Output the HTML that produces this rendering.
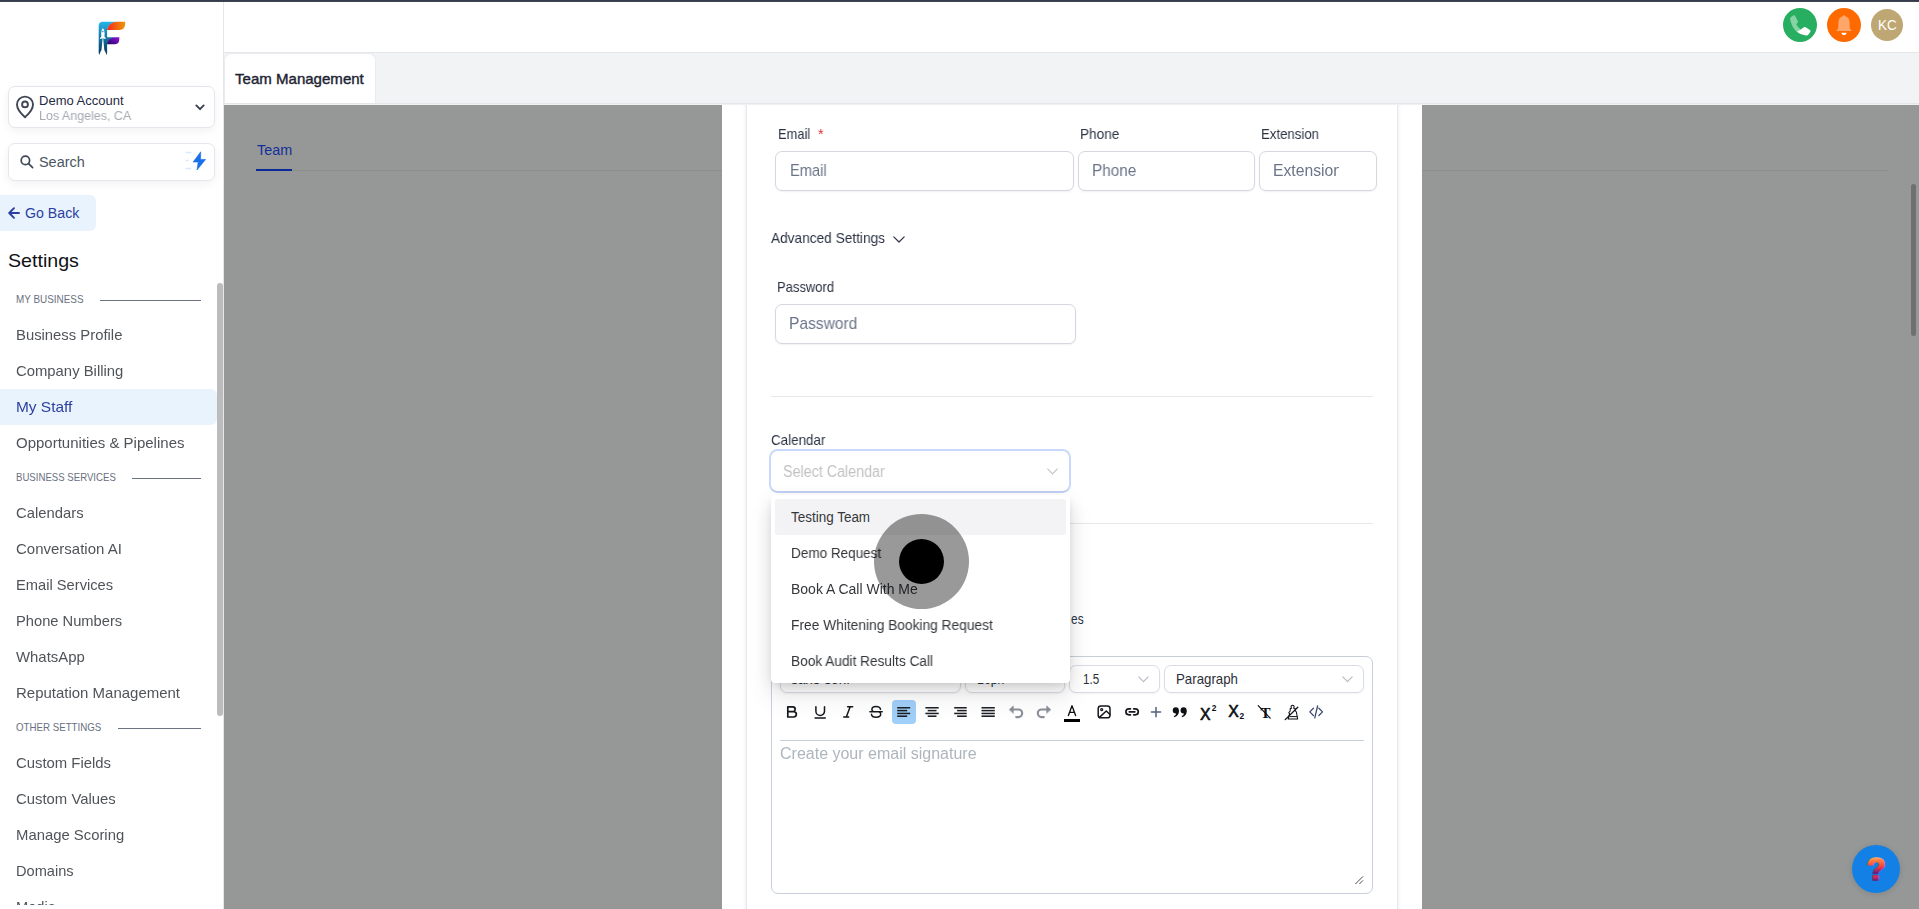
<!DOCTYPE html>
<html lang="en">
<head>
<meta charset="utf-8">
<title>Team Management</title>
<style>
*{box-sizing:border-box;margin:0;padding:0}
html,body{width:1919px;height:909px;overflow:hidden;background:#fff;font-family:"Liberation Sans",sans-serif;color:#374151}
.t{position:absolute;white-space:pre}
.a{position:absolute}
svg{position:absolute;overflow:visible}
#topstrip{left:0;top:0;width:1919px;height:2px;background:#353b4e;box-shadow:inset 0 -1px 0 #40444f;z-index:50}
#sidebar{left:0;top:0;width:224px;height:909px;background:#fff;border-right:1px solid #e5e7eb;z-index:20;overflow:hidden}
.box{position:absolute;left:8px;width:207px;background:#fff;border:1px solid #e4e7ec;border-radius:7px;box-shadow:0 3px 10px rgba(16,24,40,.055)}
.secline{position:absolute;height:1px;background:#6b7280}
#header{left:224px;top:0;width:1695px;height:53px;background:#fff;border-bottom:1px solid #e5e7eb;z-index:20}
#tabbar{left:224px;top:53px;width:1695px;height:52px;background:#f2f3f5;border-bottom:1px solid #eef0f3;box-shadow:inset 0 -1px 0 #e4e6ea;z-index:20}
#tab{left:0px;top:0px;width:152px;height:50px;background:#fff;border-radius:7px 7px 0 0;border:1px solid #e9ebef;border-bottom:none}
#main{left:224px;top:105px;width:1695px;height:804px;background:#969897;z-index:5;overflow:hidden}
#modal{left:722px;top:105px;width:700px;height:804px;background:#fff;z-index:10;overflow:hidden}
.inp{position:absolute;height:40px;border:1px solid #d5d8e0;border-radius:7px;background:#fff;box-shadow:0 1px 2px rgba(16,24,40,.06)}
.hr{position:absolute;height:1px;background:#e5e7eb}
.sel{position:absolute;height:28px;top:560px;border:1px solid #d9dce3;border-radius:7px;background:#fff;box-shadow:0 1px 2px rgba(16,24,40,.05)}
</style>
</head>
<body>
<div id="topstrip" class="a"></div>
<div id="sidebar" class="a">
<svg style="left:90px;top:15px" width="45" height="45" viewBox="0 0 45 45">
<defs>
<linearGradient id="lgA" x1="0" y1="0" x2="0" y2="1"><stop offset="0" stop-color="#27b7ea"/><stop offset=".45" stop-color="#117aa8"/><stop offset="1" stop-color="#0a3558"/></linearGradient>
<linearGradient id="lgB" x1="0" y1="0" x2="1" y2="0"><stop offset="0" stop-color="#f8241c"/><stop offset=".5" stop-color="#f2620f"/><stop offset="1" stop-color="#ee960a"/></linearGradient>
<linearGradient id="lgC" x1="0" y1="1" x2="1" y2="0"><stop offset="0" stop-color="#22085f"/><stop offset="1" stop-color="#9310e0"/></linearGradient>
</defs>
<path d="M8.7 38 V10.8 Q8.7 6.7 12.8 6.7 H28 Q18.8 7.4 17.1 14.9 V22.3 H25.5 Q18.8 23 17.1 29.2 V38 L16.6 39.9 L15.5 37.2 L14.3 35 L13.25 24 H12.55 L11.5 35 L10.3 37.2 L9.2 39.9 Z" fill="url(#lgA)"/>
<path d="M16.9 14.9 Q18.6 7 28 6.8 H35.2 V8.6 Q35.2 14.9 29.4 14.9 Z" fill="url(#lgB)"/>
<path d="M16.9 29.2 Q18.4 22.5 25.4 22.3 H29.3 V24 Q29.3 29.2 25 29.2 Z" fill="url(#lgC)"/>
<path d="M12.9 13.1 Q14.7 15 14.6 18.2 L14.5 21.4 L15.7 23 L15.7 24 L13.7 23.4 L12.9 23.7 L12.1 23.4 L10.1 24 L10.1 23 L11.3 21.4 L11.2 18.2 Q11.1 15 12.9 13.1 Z" fill="#fff"/>
<circle cx="12.9" cy="16.5" r="0.75" fill="#2c90c2"/>
</svg>
<div class="box" style="top:86px;height:42px"></div>
<svg style="left:15px;top:95px" width="20" height="24" viewBox="0 0 20 24" fill="none" stroke="#3f4756" stroke-width="1.9" stroke-linejoin="round"><path d="M10 22.2 C10 22.2 2 15.4 2 9.6 A8 8 0 0 1 18 9.6 C18 15.4 10 22.2 10 22.2 Z"/><circle cx="10" cy="9.4" r="2.9"/></svg>
<div class="t" style="left:39.4px;top:94px;font-size:12.6px;line-height:14px;color:#1f2a44;transform:scaleX(1.0329);transform-origin:0 0;z-index:2;">Demo Account</div>
<div class="t" style="left:39.4px;top:109px;font-size:12.6px;line-height:14px;color:#a6a9b1;transform:scaleX(0.9911);transform-origin:0 0;z-index:2;will-change:transform;">Los Angeles, CA</div>
<svg style="left:195px;top:103.6px" width="10" height="7" viewBox="0 0 10 7" fill="none" stroke="#3a4150" stroke-width="1.9" stroke-linecap="round" stroke-linejoin="round"><path d="M1.3 1.4 L5 5.2 L8.7 1.4"/></svg>
<div class="box" style="top:143px;height:38px"></div>
<svg style="left:20px;top:155px" width="14" height="14" viewBox="0 0 14 14" fill="none" stroke="#3f4756" stroke-width="1.7" stroke-linecap="round"><circle cx="5.4" cy="5.4" r="4.2"/><path d="M8.6 8.6 L12.6 12.6"/></svg>
<div class="t" style="left:38.9px;top:154px;font-size:14px;line-height:16px;color:#4b5565;transform:scaleX(1.0302);transform-origin:0 0;z-index:2;">Search</div>
<svg style="left:185px;top:151px" width="22" height="20" viewBox="0 0 22 20"><path d="M15.7 0.8 L8.1 11 L13.2 11 L12 19 L20.6 8.5 L15.6 8.5 Z" fill="#1a6fea" stroke="#1a6fea" stroke-width="0.6" stroke-linejoin="round"/><path d="M0.5 1.5 H6.5 M0.5 9.5 H3.8 M0.5 17.5 H6" stroke="#dbe9fb" stroke-width="1.3" fill="none"/></svg>
<div class="a" style="left:0;top:195px;width:96px;height:36px;background:#e9f3fe;border-radius:0 6px 6px 0"></div>
<svg style="left:8px;top:207px" width="12" height="12" viewBox="0 0 12 12" fill="none" stroke="#2b3fa0" stroke-width="1.9" stroke-linecap="round" stroke-linejoin="round"><path d="M11 6 H1.4 M6 1.2 L1.2 6 L6 10.8"/></svg>
<div class="t" style="left:25.0px;top:205px;font-size:14px;line-height:16px;color:#2b3fa0;transform:scaleX(1.0111);transform-origin:0 0;z-index:2;">Go Back</div>
<div class="t" style="left:8.3px;top:251px;font-size:18.2px;line-height:20px;color:#0f1115;transform:scaleX(1.0788);transform-origin:0 0;z-index:2;">Settings</div>
<div class="t" style="left:16.3px;top:294px;font-size:10.4px;line-height:11px;color:#687080;transform:scaleX(0.9528);transform-origin:0 0;z-index:2;">MY BUSINESS</div><div class="secline" style="left:100px;top:299.6px;width:101px"></div>
<div class="t" style="left:16.2px;top:327px;font-size:14.3px;line-height:16px;color:#505459;transform:scaleX(1.0379);transform-origin:0 0;z-index:2;will-change:transform;">Business Profile</div>
<div class="t" style="left:16.2px;top:363px;font-size:14.3px;line-height:16px;color:#505459;transform:scaleX(1.0386);transform-origin:0 0;z-index:2;will-change:transform;">Company Billing</div>
<div class="a" style="left:0;top:389px;width:216.5px;height:36px;background:#e9f3fe;border-radius:0 6px 6px 0"></div>
<div class="t" style="left:16.2px;top:399px;font-size:14.3px;line-height:16px;color:#2b3fa0;transform:scaleX(1.0788);transform-origin:0 0;z-index:2;will-change:transform;">My Staff</div>
<div class="t" style="left:16.2px;top:435px;font-size:14.3px;line-height:16px;color:#505459;transform:scaleX(1.0495);transform-origin:0 0;z-index:2;will-change:transform;">Opportunities &amp; Pipelines</div>
<div class="t" style="left:16.3px;top:472px;font-size:10.4px;line-height:11px;color:#687080;transform:scaleX(0.9258);transform-origin:0 0;z-index:2;">BUSINESS SERVICES</div><div class="secline" style="left:132px;top:477.6px;width:69px"></div>
<div class="t" style="left:16.2px;top:505px;font-size:14.3px;line-height:16px;color:#505459;transform:scaleX(1.0373);transform-origin:0 0;z-index:2;will-change:transform;">Calendars</div>
<div class="t" style="left:16.2px;top:541px;font-size:14.3px;line-height:16px;color:#505459;transform:scaleX(1.0482);transform-origin:0 0;z-index:2;will-change:transform;">Conversation AI</div>
<div class="t" style="left:16.2px;top:577px;font-size:14.3px;line-height:16px;color:#505459;transform:scaleX(1.0270);transform-origin:0 0;z-index:2;will-change:transform;">Email Services</div>
<div class="t" style="left:16.2px;top:613px;font-size:14.3px;line-height:16px;color:#505459;transform:scaleX(1.0279);transform-origin:0 0;z-index:2;will-change:transform;">Phone Numbers</div>
<div class="t" style="left:16.2px;top:649px;font-size:14.3px;line-height:16px;color:#505459;transform:scaleX(1.0429);transform-origin:0 0;z-index:2;will-change:transform;">WhatsApp</div>
<div class="t" style="left:16.2px;top:685px;font-size:14.3px;line-height:16px;color:#505459;transform:scaleX(1.0474);transform-origin:0 0;z-index:2;will-change:transform;">Reputation Management</div>
<div class="t" style="left:16.3px;top:722px;font-size:10.4px;line-height:11px;color:#687080;transform:scaleX(0.9351);transform-origin:0 0;z-index:2;">OTHER SETTINGS</div><div class="secline" style="left:118px;top:727.6px;width:83px"></div>
<div class="t" style="left:16.2px;top:755px;font-size:14.3px;line-height:16px;color:#505459;transform:scaleX(1.0397);transform-origin:0 0;z-index:2;will-change:transform;">Custom Fields</div>
<div class="t" style="left:16.2px;top:791px;font-size:14.3px;line-height:16px;color:#505459;transform:scaleX(1.0408);transform-origin:0 0;z-index:2;will-change:transform;">Custom Values</div>
<div class="t" style="left:16.2px;top:827px;font-size:14.3px;line-height:16px;color:#505459;transform:scaleX(1.0391);transform-origin:0 0;z-index:2;will-change:transform;">Manage Scoring</div>
<div class="t" style="left:16.2px;top:863px;font-size:14.3px;line-height:16px;color:#505459;transform:scaleX(1.0209);transform-origin:0 0;z-index:2;will-change:transform;">Domains</div>
<div class="t" style="left:16.2px;top:899px;font-size:14.3px;line-height:16px;color:#505459;transform:scaleX(1.0217);transform-origin:0 0;z-index:2;will-change:transform;">Media</div>
<div class="a" style="left:0;top:905px;width:217px;height:4px;background:#fff;z-index:3"></div>
<div class="a" style="left:217px;top:283px;width:6px;height:433px;background:#bcbcbc;border-radius:3px"></div>
</div>
<div id="header" class="a"></div>
<div id="tabbar" class="a"><div id="tab" class="a"></div></div>
<div class="t" style="left:235.4px;top:70px;font-size:15px;line-height:17px;color:#1c2333;transform:scaleX(1.0031);transform-origin:0 0;z-index:21;-webkit-text-stroke:0.4px #1c2333;">Team Management</div>
<div class="a" style="left:1783px;top:8px;width:34px;height:34px;border-radius:50%;background:#27ae60;z-index:21"></div>
<svg style="left:1786px;top:11.5px;z-index:22" width="27.4" height="27.4" viewBox="0 0 24 24"><path d="M4.2 4.6 L6.6 2.9 Q7.4 2.5 7.9 3.3 L10.4 8.2 Q10.8 9 10.1 9.6 L8.9 10.6 Q10.2 13.6 13.2 15.6 L9.2 17.4 Q4.6 12.6 3.6 6 Q3.5 5.1 4.2 4.6 Z" fill="#86d3a4"/><path d="M13 15.4 L15.6 13.3 Q16.4 12.8 17.2 13.3 L21 15.8 Q21.8 16.5 21.3 17.4 L19.9 19.6 Q19 20.8 17.4 20.6 Q12.6 19.9 9.4 17.2 Z" fill="#fff"/></svg>
<div class="a" style="left:1827px;top:8px;width:34px;height:34px;border-radius:50%;background:#ff6a00;z-index:21"></div>
<svg style="left:1833px;top:13px;z-index:22" width="22" height="24" viewBox="0 0 22 24"><path d="M11 2.2 Q11.9 2.2 12.2 3.2 Q16.6 4.4 16.6 9.4 L16.6 13.4 Q16.6 15.6 18.4 17.2 L18.4 18 L3.6 18 L3.6 17.2 Q5.4 15.6 5.4 13.4 L5.4 9.4 Q5.4 4.4 9.8 3.2 Q10.1 2.2 11 2.2 Z" fill="#ffa66b"/><path d="M8.2 19.8 H13.8 Q13.2 22.2 11 22.2 Q8.8 22.2 8.2 19.8 Z" fill="#fff"/></svg>
<div class="a" style="left:1871px;top:9px;width:32px;height:32px;border-radius:50%;background:#bea772;z-index:21"></div>
<div class="t" style="left:1877.8px;top:17px;font-size:14.2px;line-height:16px;color:#fff;transform:scaleX(0.9534);transform-origin:0 0;z-index:22;">KC</div>
<div id="main" class="a"></div>
<div class="t" style="left:256.6px;top:141px;font-size:15px;line-height:17px;color:#122e9a;transform:scaleX(0.9595);transform-origin:0 0;z-index:6;">Team</div>
<div class="a" style="left:256px;top:170px;width:1632px;height:1px;background:#8d8f8f;z-index:6"></div>
<div class="a" style="left:256px;top:169px;width:36px;height:2px;background:#0a2a98;z-index:6"></div>
<div class="a" style="left:1911px;top:184px;width:5px;height:152px;background:#6f7070;border-radius:2.5px;z-index:6"></div>
<div id="modal" class="a"></div>
<div class="a" style="left:746px;top:95px;width:652px;height:830px;border:1px solid #e6e7ef;background:#fff;z-index:11;box-shadow:0 0 4px rgba(16,24,40,.09)"></div>
<div class="t" style="left:777.5px;top:126px;font-size:14.3px;line-height:16px;color:#2c3444;transform:scaleX(0.9007);transform-origin:0 0;z-index:12;will-change:transform;">Email</div>
<div class="t" style="left:818.4px;top:126px;font-size:14.5px;line-height:16px;color:#e5322d;z-index:12;will-change:transform;">*</div>
<div class="t" style="left:1079.7px;top:126px;font-size:14.3px;line-height:16px;color:#2c3444;transform:scaleX(0.9506);transform-origin:0 0;z-index:12;will-change:transform;">Phone</div>
<div class="t" style="left:1261.4px;top:126px;font-size:14.3px;line-height:16px;color:#2c3444;transform:scaleX(0.9236);transform-origin:0 0;z-index:12;will-change:transform;">Extension</div>
<div class="inp" style="left:775px;top:151px;width:299px;z-index:12"></div>
<div class="inp" style="left:1078px;top:151px;width:177px;z-index:12"></div>
<div class="inp" style="left:1259px;top:151px;width:118px;z-index:12"></div>
<div class="t" style="left:789.7px;top:162px;font-size:15.7px;line-height:17px;color:#6b7588;transform:scaleX(0.9329);transform-origin:0 0;z-index:13;will-change:transform;">Email</div>
<div class="t" style="left:1092.4px;top:162px;font-size:15.7px;line-height:17px;color:#6b7588;transform:scaleX(0.9741);transform-origin:0 0;z-index:13;will-change:transform;">Phone</div>
<div class="a" style="left:1273.4px;top:162px;width:65.8px;height:17px;overflow:hidden;z-index:13;will-change:transform"><div class="t" style="left:0;top:0;font-size:15.7px;line-height:17px;color:#6b7588;transform:scaleX(1.0030);transform-origin:0 0">Extension</div></div>
<div class="t" style="left:771.4px;top:229px;font-size:15px;line-height:17px;color:#2c3444;transform:scaleX(0.9113);transform-origin:0 0;z-index:12;will-change:transform;">Advanced Settings</div>
<svg style="left:893px;top:236px;z-index:12" width="12" height="7" viewBox="0 0 12 7" fill="none" stroke="#2c3444" stroke-width="1.2" stroke-linecap="round" stroke-linejoin="round"><path d="M0.8 0.8 L6 6 L11.2 0.8"/></svg>
<div class="t" style="left:776.9px;top:279px;font-size:14.3px;line-height:16px;color:#2c3444;transform:scaleX(0.9095);transform-origin:0 0;z-index:12;will-change:transform;">Password</div>
<div class="inp" style="left:775px;top:304px;width:301px;z-index:12"></div>
<div class="t" style="left:789.4px;top:315px;font-size:15.7px;line-height:17px;color:#6b7588;transform:scaleX(0.9900);transform-origin:0 0;z-index:13;will-change:transform;">Password</div>
<div class="hr" style="left:771px;top:396px;width:602px;z-index:12"></div>
<div class="t" style="left:771.2px;top:432px;font-size:14.3px;line-height:16px;color:#2c3444;transform:scaleX(0.9374);transform-origin:0 0;z-index:12;will-change:transform;">Calendar</div>
<div class="a" style="left:769.4px;top:449.3px;width:302px;height:43.4px;border:2.4px solid #cad9fb;border-bottom-color:#c0cef3;border-radius:8.5px;background:#fff;z-index:12"></div>
<div class="t" style="left:783.0px;top:463px;font-size:15.6px;line-height:17px;color:#c2c2c4;transform:scaleX(0.9174);transform-origin:0 0;z-index:13;will-change:transform;">Select Calendar</div>
<svg style="left:1047px;top:468px;z-index:13" width="11" height="7" viewBox="0 0 11 7" fill="none" stroke="#c3c3c6" stroke-width="1.1" stroke-linecap="round" stroke-linejoin="round"><path d="M0.7 0.8 L5.5 5.8 L10.3 0.8"/></svg>
<div class="hr" style="left:771px;top:523px;width:602px;z-index:12"></div>
<div class="t" style="left:1070.6px;top:611px;font-size:14.3px;line-height:16px;color:#2c3444;transform:scaleX(0.8339);transform-origin:0 0;z-index:12;">es</div>
<div class="a" style="left:771px;top:656px;width:602px;height:238px;border:1px solid #c9cedb;border-radius:7px;background:#fff;z-index:12"></div>
<div class="sel" style="left:780px;top:665px;width:181px;z-index:13"></div>
<div class="sel" style="left:965px;top:665px;width:100px;z-index:13"></div>
<div class="sel" style="left:1069px;top:665px;width:91px;z-index:13"></div>
<div class="sel" style="left:1164px;top:665px;width:200px;z-index:13"></div>
<div class="t" style="left:791.0px;top:671px;font-size:14.2px;line-height:16px;color:#2c3038;transform:scaleX(0.9593);transform-origin:0 0;z-index:14;">sans-serif</div>
<div class="t" style="left:977.0px;top:671px;font-size:14.2px;line-height:16px;color:#2c3038;transform:scaleX(0.8776);transform-origin:0 0;z-index:14;">16px</div>
<div class="t" style="left:1083.0px;top:671px;font-size:14.2px;line-height:16px;color:#2c3038;transform:scaleX(0.8209);transform-origin:0 0;z-index:14;">1.5</div>
<div class="t" style="left:1176.4px;top:671px;font-size:14.2px;line-height:16px;color:#2c3038;transform:scaleX(0.9356);transform-origin:0 0;z-index:14;">Paragraph</div>
<svg style="left:939px;top:676px;z-index:14" width="11" height="7" viewBox="0 0 11 7" fill="none" stroke="#b4b8c1" stroke-width="1.1" stroke-linecap="round" stroke-linejoin="round"><path d="M0.8 0.8 L5.5 5.6 L10.2 0.8"/></svg>
<svg style="left:1043px;top:676px;z-index:14" width="11" height="7" viewBox="0 0 11 7" fill="none" stroke="#b4b8c1" stroke-width="1.1" stroke-linecap="round" stroke-linejoin="round"><path d="M0.8 0.8 L5.5 5.6 L10.2 0.8"/></svg>
<svg style="left:1138px;top:676px;z-index:14" width="11" height="7" viewBox="0 0 11 7" fill="none" stroke="#b4b8c1" stroke-width="1.1" stroke-linecap="round" stroke-linejoin="round"><path d="M0.8 0.8 L5.5 5.6 L10.2 0.8"/></svg>
<svg style="left:1342px;top:676px;z-index:14" width="11" height="7" viewBox="0 0 11 7" fill="none" stroke="#b4b8c1" stroke-width="1.1" stroke-linecap="round" stroke-linejoin="round"><path d="M0.8 0.8 L5.5 5.6 L10.2 0.8"/></svg>
<div class="a" style="left:780px;top:740px;width:584px;height:1px;background:#c9cedb;z-index:13"></div>
<div class="t" style="left:780.0px;top:745px;font-size:16px;line-height:17px;color:#adb5bd;z-index:13;will-change:transform;">Create your email signature</div>
<svg style="left:1355px;top:876px;z-index:13" width="9" height="9" viewBox="0 0 9 9" fill="none" stroke="#4a4a4a" stroke-width="1"><path d="M8 0.4 L0.4 8 M8 4.4 L4.4 8"/></svg>
<div class="a" style="left:892px;top:700px;width:24px;height:24px;background:#a0cff8;border-radius:4px;z-index:13"></div>
<svg style="left:782px;top:702px;z-index:14;overflow:hidden" width="546" height="22" viewBox="782 702 546 22" fill="none" stroke="#15181d" stroke-linecap="round" stroke-linejoin="round">
<g stroke-width="1.7">
<path d="M787.8 706.8 H792.7 a2.45 2.45 0 0 1 0 4.9 H787.8 Z M787.8 711.7 H793.7 a2.65 2.65 0 0 1 0 5.3 H787.8 Z"/>
</g>
<g stroke-width="1.5">
<path d="M815.9 706.7 V711.2 a4.3 4.3 0 0 0 8.6 0 V706.7 M815.1 717.9 H825.3"/>
<path d="M847.6 706.7 H852.7 M843.7 717.1 H848.7 M850.2 706.7 L846.3 717.1"/>
<path d="M880.5 709.3 Q880.1 706.4 876.1 706.4 Q871.9 706.4 871.9 709.3 Q871.9 710.8 873.2 711.7 M871.5 714.3 Q871.8 717.2 876.1 717.2 Q880.7 717.2 880.7 714.3 Q880.7 712.7 879.1 711.7 M869.9 711.7 H882.2"/>
</g>
<g stroke-width="1.55" stroke="#1c1f24" stroke-linecap="butt"><path d="M897.2 707.75 H910.2"/><path d="M897.2 710.6 H907.2"/><path d="M897.2 713.45 H910.2"/><path d="M897.2 716.2 H907.2"/><path d="M925.4 707.75 H938.7"/><path d="M927.7 710.6 H936.5"/><path d="M925.4 713.45 H938.7"/><path d="M927.7 716.2 H936.5"/><path d="M954.2 707.75 H966.7"/><path d="M957.1 710.6 H966.7"/><path d="M954.2 713.45 H966.7"/><path d="M957.1 716.2 H966.7"/><path d="M981.5 707.75 H994.8"/><path d="M981.5 710.6 H994.8"/><path d="M981.5 713.45 H994.8"/><path d="M981.5 716.2 H994.8"/></g>
<g stroke="#8b909b" stroke-width="2.1">
<path d="M1013 709.5 H1018.4 a3.8 3.8 0 0 1 0 7.6 H1016.2"/>
<path d="M1009.3 709.5 L1013.3 705.9 V713.1 Z" fill="#8b909b" stroke-width="0.6"/>
<path d="M1047 709.5 H1041.6 a3.8 3.8 0 0 0 0 7.6 H1043.8"/>
<path d="M1050.7 709.5 L1046.7 705.9 V713.1 Z" fill="#8b909b" stroke-width="0.6"/>
</g>
<g stroke="#111" stroke-width="1.35">
<path d="M1068.4 715.6 L1072 705.8 L1075.6 715.6 M1069.7 712.4 H1074.3"/>
</g>
<rect x="1064" y="719" width="16" height="3" fill="#000" stroke="none"/>
<g stroke-width="1.5">
<rect x="1098.2" y="706.1" width="11.8" height="11.7" rx="2.6"/>
<circle cx="1101.7" cy="709.6" r="1.05" stroke-width="1.2"/>
<path d="M1099.4 717.4 L1106.3 711 L1110 714.5"/>
</g>
<g stroke-width="1.7">
<path d="M1130.5 708.85 H1128.9 a3 3 0 0 0 0 6 H1130.5 M1133.7 708.85 H1135.3 a3 3 0 0 1 0 6 H1133.7 M1129.3 711.85 H1134.9"/>
</g>
<g stroke="#566080" stroke-width="1.5">
<path d="M1156 707.5 V716.7 M1151.4 712.1 H1160.6"/>
</g>
<g stroke="none" fill="#0c0f13">
<circle cx="1175.8" cy="710.4" r="3.05"/><path d="M1178.85 710.4 Q1179.3 715.4 1174.3 717.3 L1173.8 716.3 Q1176.3 715 1176.4 712.2 Z"/>
<circle cx="1183.6" cy="710.4" r="3.05"/><path d="M1186.65 710.4 Q1187.1 715.4 1182.1 717.3 L1181.6 716.3 Q1184.1 715 1184.2 712.2 Z"/>
</g>
<g stroke="none" fill="#0c0f13" font-family="Liberation Sans, sans-serif">
<text x="1200" y="719.6" font-size="15.8" stroke="#0c0f13" stroke-width="0.55">X</text>
<text x="1211.7" y="711" font-size="8.4" font-weight="700">2</text>
<text x="1228.2" y="716.8" font-size="15.8" stroke="#0c0f13" stroke-width="0.55">X</text>
<text x="1239.5" y="718.6" font-size="8.4" font-weight="700">2</text>
<text x="1260.4" y="717.9" font-size="15" font-weight="700" font-family="Liberation Serif, serif">T</text>
</g>
<g stroke="#0c0f13" stroke-width="1.2">
<path d="M1258.2 705.7 L1270.2 718.2"/>
<path d="M1291.6 708.2 Q1290.6 706.9 1291.3 705.9 Q1292.6 704.6 1293.9 705.9 Q1294.6 706.9 1293.6 708.2 L1295.2 708.6 V710.6 L1296.4 712 L1297.6 719 H1288.2 L1289.6 713.6 L1288.8 712.6 L1290.2 711 V708.6 Z" stroke-width="1.05"/>
<path d="M1290 716.6 H1297" stroke-width="1"/>
<path d="M1285.2 719.6 L1297.8 707.2" stroke-width="1.3"/>
</g>
<g stroke="#3f4b6c" stroke-width="1.3">
<path d="M1313.4 708.3 L1309.8 711.9 L1313.4 715.5 M1318.9 708.3 L1322.5 711.9 L1318.9 715.5 M1317.6 706 L1314.8 717.9"/>
</g>
</svg>
<div class="a" style="left:771px;top:495px;width:299px;height:188px;background:#fff;border-radius:4px;box-shadow:0 3px 8px -2px rgba(0,0,0,.12),0 6px 20px 0 rgba(0,0,0,.10),0 14px 24px 4px rgba(0,0,0,.06);z-index:30"></div>
<div class="a" style="left:775px;top:499px;width:291px;height:36px;background:#f3f3f5;border-radius:3px;z-index:31"></div>
<div class="t" style="left:791.2px;top:510px;font-size:13.8px;line-height:15px;color:#35373b;transform:scaleX(0.9760);transform-origin:0 0;z-index:32;">Testing Team</div>
<div class="t" style="left:791.2px;top:546px;font-size:13.8px;line-height:15px;color:#35373b;transform:scaleX(0.9801);transform-origin:0 0;z-index:32;will-change:transform;">Demo Request</div>
<div class="t" style="left:791.2px;top:582px;font-size:13.8px;line-height:15px;color:#35373b;transform:scaleX(1.0144);transform-origin:0 0;z-index:32;will-change:transform;">Book A Call With Me</div>
<div class="t" style="left:791.2px;top:618px;font-size:13.8px;line-height:15px;color:#35373b;transform:scaleX(0.9967);transform-origin:0 0;z-index:32;will-change:transform;">Free Whitening Booking Request</div>
<div class="t" style="left:791.2px;top:654px;font-size:13.8px;line-height:15px;color:#35373b;transform:scaleX(0.9902);transform-origin:0 0;z-index:32;will-change:transform;">Book Audit Results Call</div>
<div class="a" style="left:874px;top:514px;width:95px;height:95px;border-radius:50%;background:rgba(0,0,0,.4);z-index:40"></div>
<div class="a" style="left:899px;top:539px;width:45px;height:45px;border-radius:50%;background:#000;z-index:41"></div>
<div class="a" style="left:1852px;top:845px;width:48px;height:48px;border-radius:50%;background:#1380e5;box-shadow:0 1px 6px rgba(0,0,0,.12);z-index:40"></div>
<svg style="left:1862px;top:852px;z-index:41" width="28" height="34" viewBox="0 0 28 34"><defs><linearGradient id="qg" gradientUnits="userSpaceOnUse" x1="0" y1="4.5" x2="0" y2="29.5"><stop offset="0" stop-color="#ffc58a"/><stop offset=".12" stop-color="#ff8a42"/><stop offset=".42" stop-color="#f23844"/><stop offset=".68" stop-color="#5a1f86"/><stop offset=".8" stop-color="#e62a52"/><stop offset="1" stop-color="#4d1a80"/></linearGradient></defs><text x="14.3" y="28.2" text-anchor="middle" font-family="Liberation Sans, sans-serif" font-weight="700" font-size="31" fill="url(#qg)" stroke="url(#qg)" stroke-width="1.7" stroke-linejoin="round">?</text></svg>
</body>
</html>
